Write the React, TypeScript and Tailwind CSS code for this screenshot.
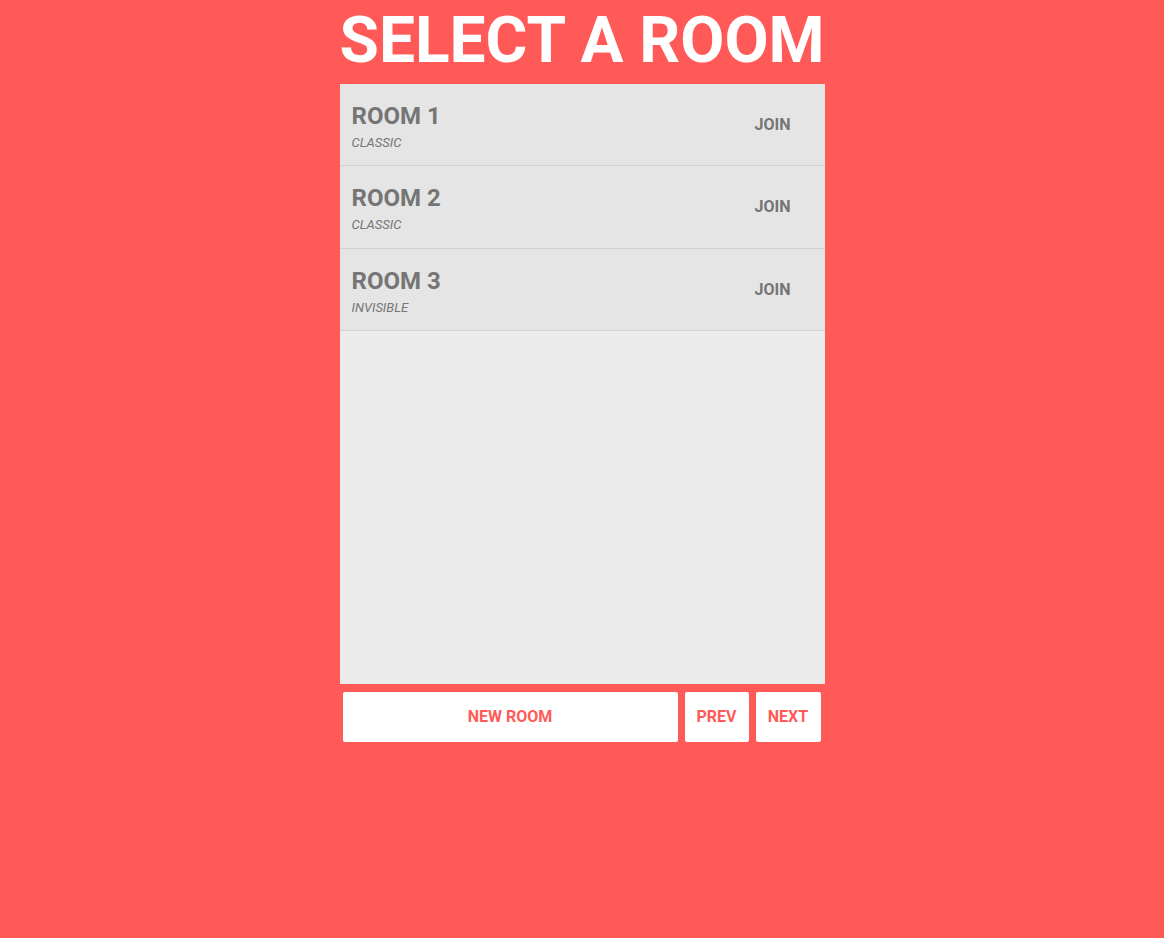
import React from "react";

const rooms = [
  { name: "ROOM 1", type: "CLASSIC" },
  { name: "ROOM 2", type: "CLASSIC" },
  { name: "ROOM 3", type: "INVISIBLE" },
];

export default function App() {
  return (
    <div
      className="min-h-[938px] w-full bg-[#ff5a58] flex flex-col items-center"
      style={{ fontFamily: "Roboto, 'Liberation Sans', sans-serif" }}
    >
      <div className="w-[485px] flex flex-col">
        <h1 className="text-white font-bold text-[64px] leading-[82px] text-center mb-[2px] whitespace-nowrap">
          SELECT A ROOM
        </h1>
        <div className="h-[600px] bg-[#ebebeb] flex flex-col">
          {rooms.map((r) => (
            <div
              key={r.name}
              className="h-[82.33px] shrink-0 bg-[#e5e5e5] border-b border-[#d2d2d2] flex items-center justify-between"
            >
              <div className="pl-[12px] self-start pt-[18px]">
                <div className="text-[24px] leading-[28px] font-bold text-[#757575]">{r.name}</div>
                <div className="mt-[4px] text-[13px] leading-[17px] italic text-[#757575]">{r.type}</div>
              </div>
              <div className="pr-[34px] pt-[1px] text-[16px] leading-[20px] font-bold text-[#757575]">JOIN</div>
            </div>
          ))}
        </div>
        <div className="flex mt-[8px] pl-[3px] pr-[4px] gap-[7px]">
          <button className="h-[50px] flex-1 bg-white rounded-[2px] text-[16px] font-bold text-[#ff5a58]">
            NEW ROOM
          </button>
          <button className="h-[50px] w-[64px] bg-white rounded-[2px] text-[16px] font-bold text-[#ff5a58]">
            PREV
          </button>
          <button className="h-[50px] w-[65px] bg-white rounded-[2px] text-[16px] font-bold text-[#ff5a58]">
            NEXT
          </button>
        </div>
      </div>
    </div>
  );
}
